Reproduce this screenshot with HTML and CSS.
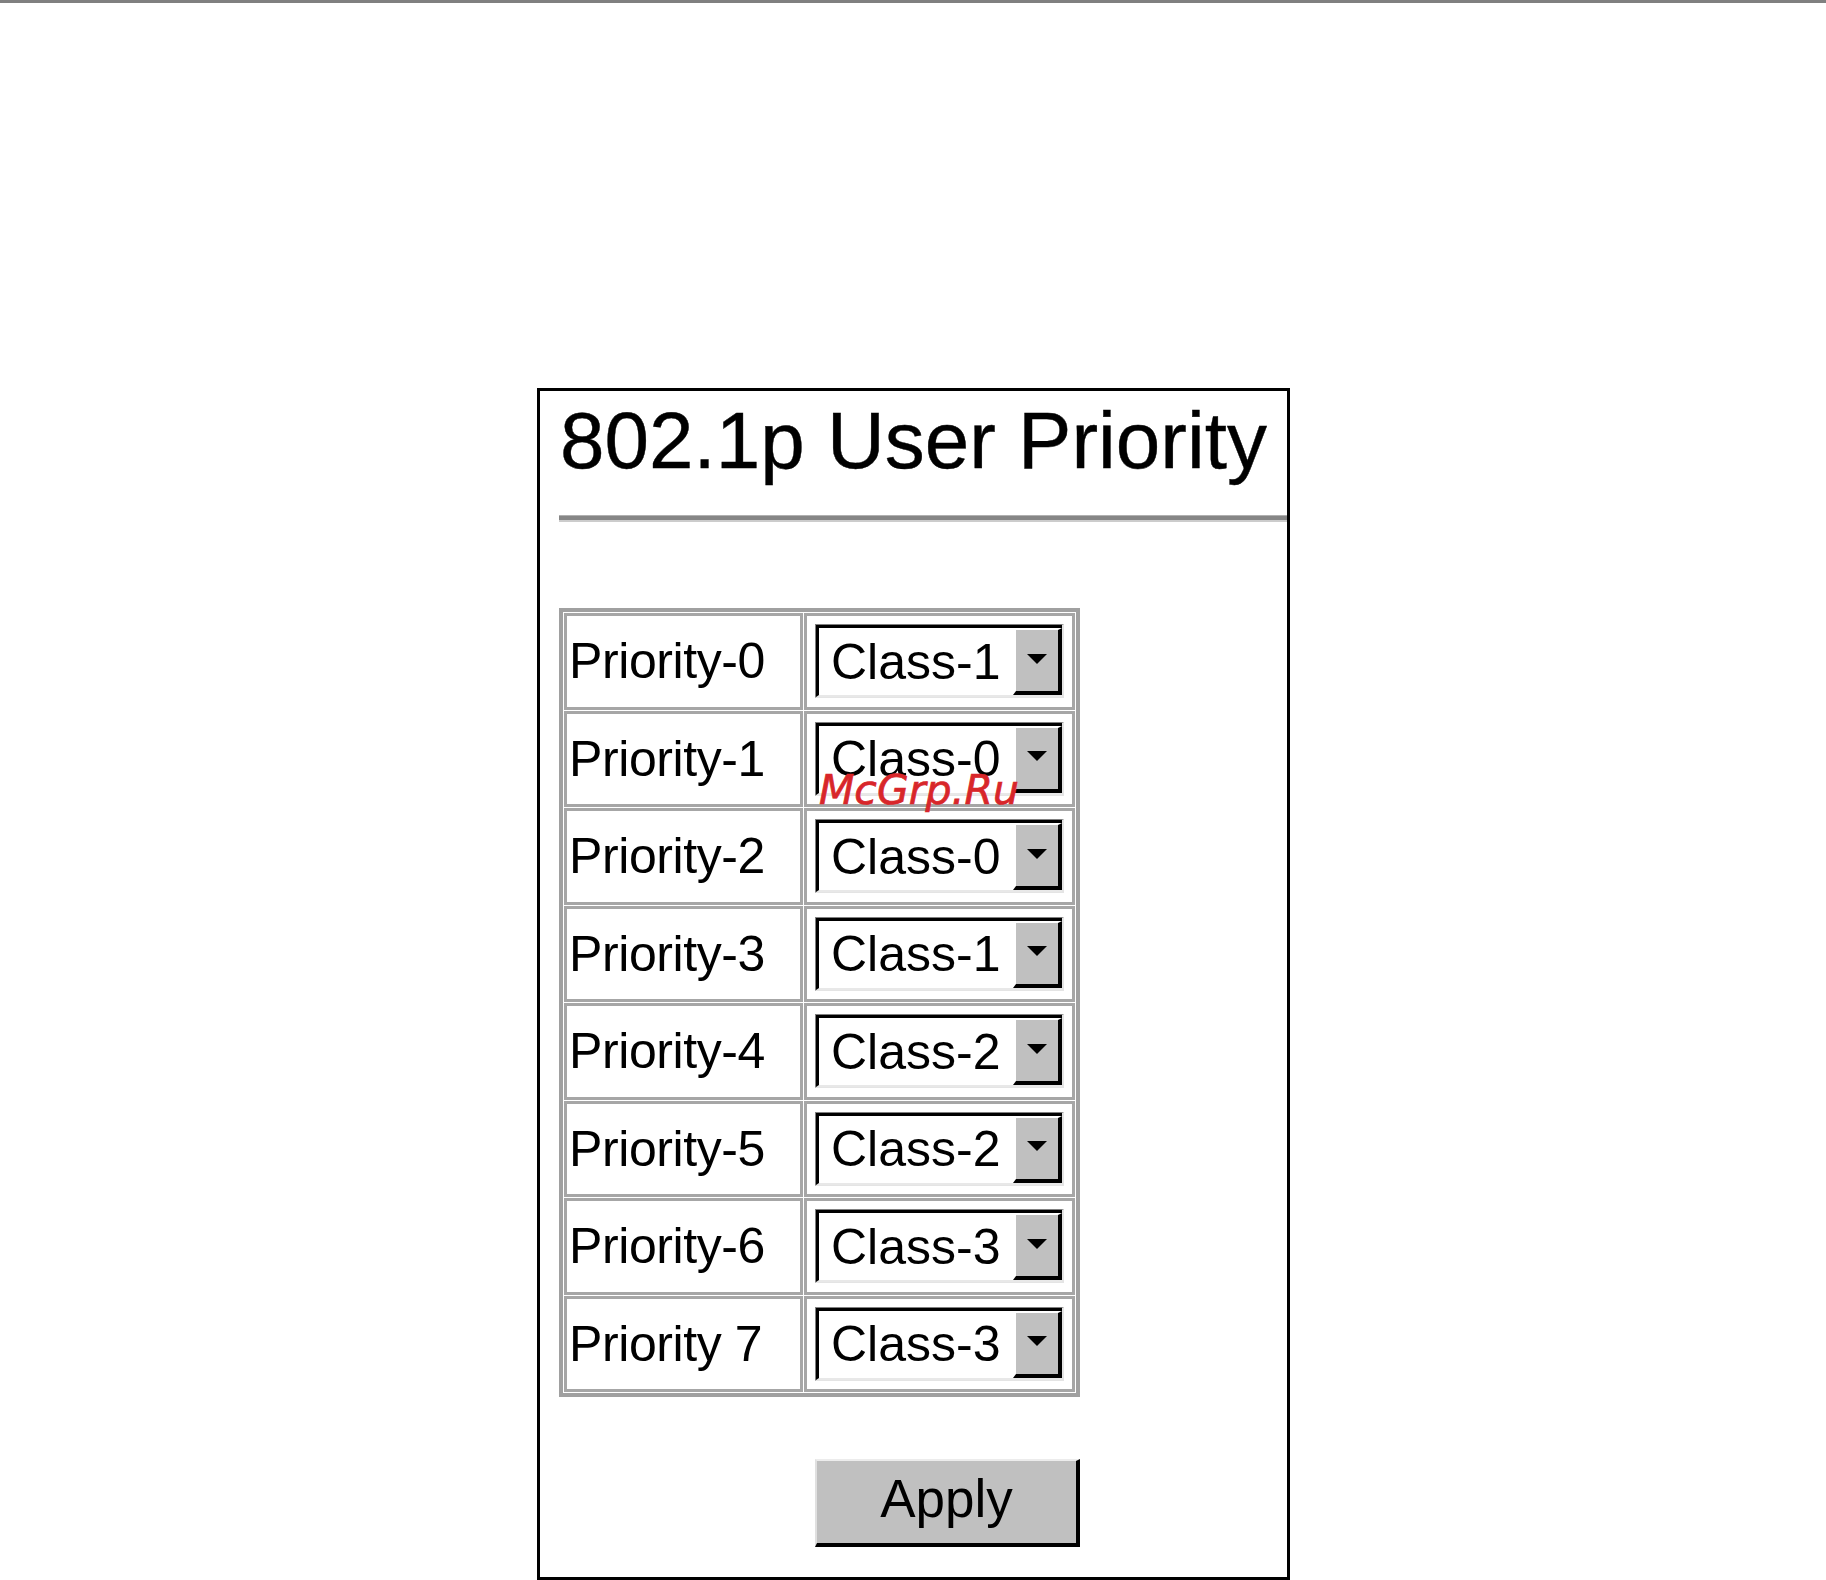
FILE: index.html
```html
<!DOCTYPE html>
<html lang="en">
<head>
<meta charset="utf-8">
<title>802.1p User Priority</title>
<link rel="stylesheet" href="styles.css">
</head>
<body>
<div class="topbar"></div>
<div class="panel">
  <h1 class="title">802.1p User Priority</h1>
  <div class="rule"></div>
  <table class="prio">
    <tr><td class="label">Priority-0</td><td class="cell"><div class="select"><div class="inner"><span class="value">Class-1</span><span class="btn"><i class="tri"></i></span></div></div></td></tr>
    <tr><td class="label">Priority-1</td><td class="cell"><div class="select"><div class="inner"><span class="value">Class-0</span><span class="btn"><i class="tri"></i></span></div></div></td></tr>
    <tr><td class="label">Priority-2</td><td class="cell"><div class="select"><div class="inner"><span class="value">Class-0</span><span class="btn"><i class="tri"></i></span></div></div></td></tr>
    <tr><td class="label">Priority-3</td><td class="cell"><div class="select"><div class="inner"><span class="value">Class-1</span><span class="btn"><i class="tri"></i></span></div></div></td></tr>
    <tr><td class="label">Priority-4</td><td class="cell"><div class="select"><div class="inner"><span class="value">Class-2</span><span class="btn"><i class="tri"></i></span></div></div></td></tr>
    <tr><td class="label">Priority-5</td><td class="cell"><div class="select"><div class="inner"><span class="value">Class-2</span><span class="btn"><i class="tri"></i></span></div></div></td></tr>
    <tr><td class="label">Priority-6</td><td class="cell"><div class="select"><div class="inner"><span class="value">Class-3</span><span class="btn"><i class="tri"></i></span></div></div></td></tr>
    <tr><td class="label">Priority 7</td><td class="cell"><div class="select"><div class="inner"><span class="value">Class-3</span><span class="btn"><i class="tri"></i></span></div></div></td></tr>
  </table>
  <div class="actions"><button class="apply" type="button">Apply</button></div>
</div>
<div class="watermark">McGrp.Ru</div>
</body>
</html>
```
FILE: styles.css
```css
html, body {
  margin: 0;
  padding: 0;
  background: #fff;
}
body {
  position: relative;
  font-family: "Liberation Sans", Arial, sans-serif;
  color: #000;
}
.topbar {
  height: 3px;
  background: #808080;
}
.panel {
  box-sizing: border-box;
  width: 753px;
  height: 1192px;
  margin: 385px 0 0 537px;
  border: 3px solid #000;
}
.title {
  margin: 10px 0 0 20px;
  font-size: 80px;
  line-height: 80px;
  font-weight: normal;
  white-space: nowrap;
  -webkit-text-stroke: 0.4px #000;
}
.rule {
  margin: 34px 0 0 19px;
  height: 4px;
  background: #868686;
  border-top: 1px solid #b0b0b0;
  border-bottom: 2px solid #cccccc;
}
.prio {
  margin: 86px 0 0 19px;
  border: 4px solid #a0a0a0;
  border-spacing: 1px;
  font-size: 50px;
}
.prio td {
  border: 3px solid #a6a6a6;
  height: 90.5px;
  padding: 0;
  vertical-align: middle;
}
.prio td.label {
  width: 231px;
  padding-left: 2px;
  white-space: nowrap;
  letter-spacing: -0.4px;
}
.prio td.cell {
  width: 249px;
  padding: 0 8px 0 8px;
}
.select {
  box-sizing: border-box;
  width: 249px;
  height: 74px;
  border-style: solid;
  border-width: 1px 2px 1px 1px;
  border-color: #808080 #e4e4e4 #e4e4e4 #808080;
}
.inner {
  display: flex;
  height: 67px;
  border-top: 3px solid #000;
  border-left: 3px solid #000;
  border-bottom: 2px solid #e8e8e8;
}
.value {
  flex: 1;
  display: flex;
  align-items: center;
  padding-left: 12px;
  background: #fff;
  line-height: 1;
  white-space: nowrap;
}
.btn {
  box-sizing: border-box;
  flex: none;
  width: 49px;
  height: 67px;
  display: flex;
  align-items: center;
  justify-content: center;
  background: #c0c0c0;
  border-style: solid;
  border-width: 2px 4px 4px 3px;
  border-color: #fff #000 #000 #fff;
}
.tri {
  display: block;
  flex: none;
  width: 0;
  height: 0;
  border-left: 10px solid transparent;
  border-right: 10px solid transparent;
  border-top: 10px solid #000;
  margin-top: -4px;
}
.actions {
  width: 521px;
  margin: 62px 0 0 19px;
  display: flex;
  justify-content: flex-end;
}
.apply {
  box-sizing: border-box;
  width: 265px;
  height: 88px;
  padding: 0 0 8px 0;
  background: #c0c0c0;
  border-style: solid;
  border-width: 2px 4px 4px 2px;
  border-color: #ececec #000 #000 #e0e0e0;
  font-family: "Liberation Sans", Arial, sans-serif;
  font-size: 53px;
  line-height: 1;
  color: #000;
}
.watermark {
  position: absolute;
  left: 819px;
  top: 770px;
  font-family: "DejaVu Sans", sans-serif;
  font-style: italic;
  font-size: 41px;
  line-height: 40px;
  color: #d8262a;
  -webkit-text-stroke: 0.7px #d8262a;
  white-space: nowrap;
}
```
